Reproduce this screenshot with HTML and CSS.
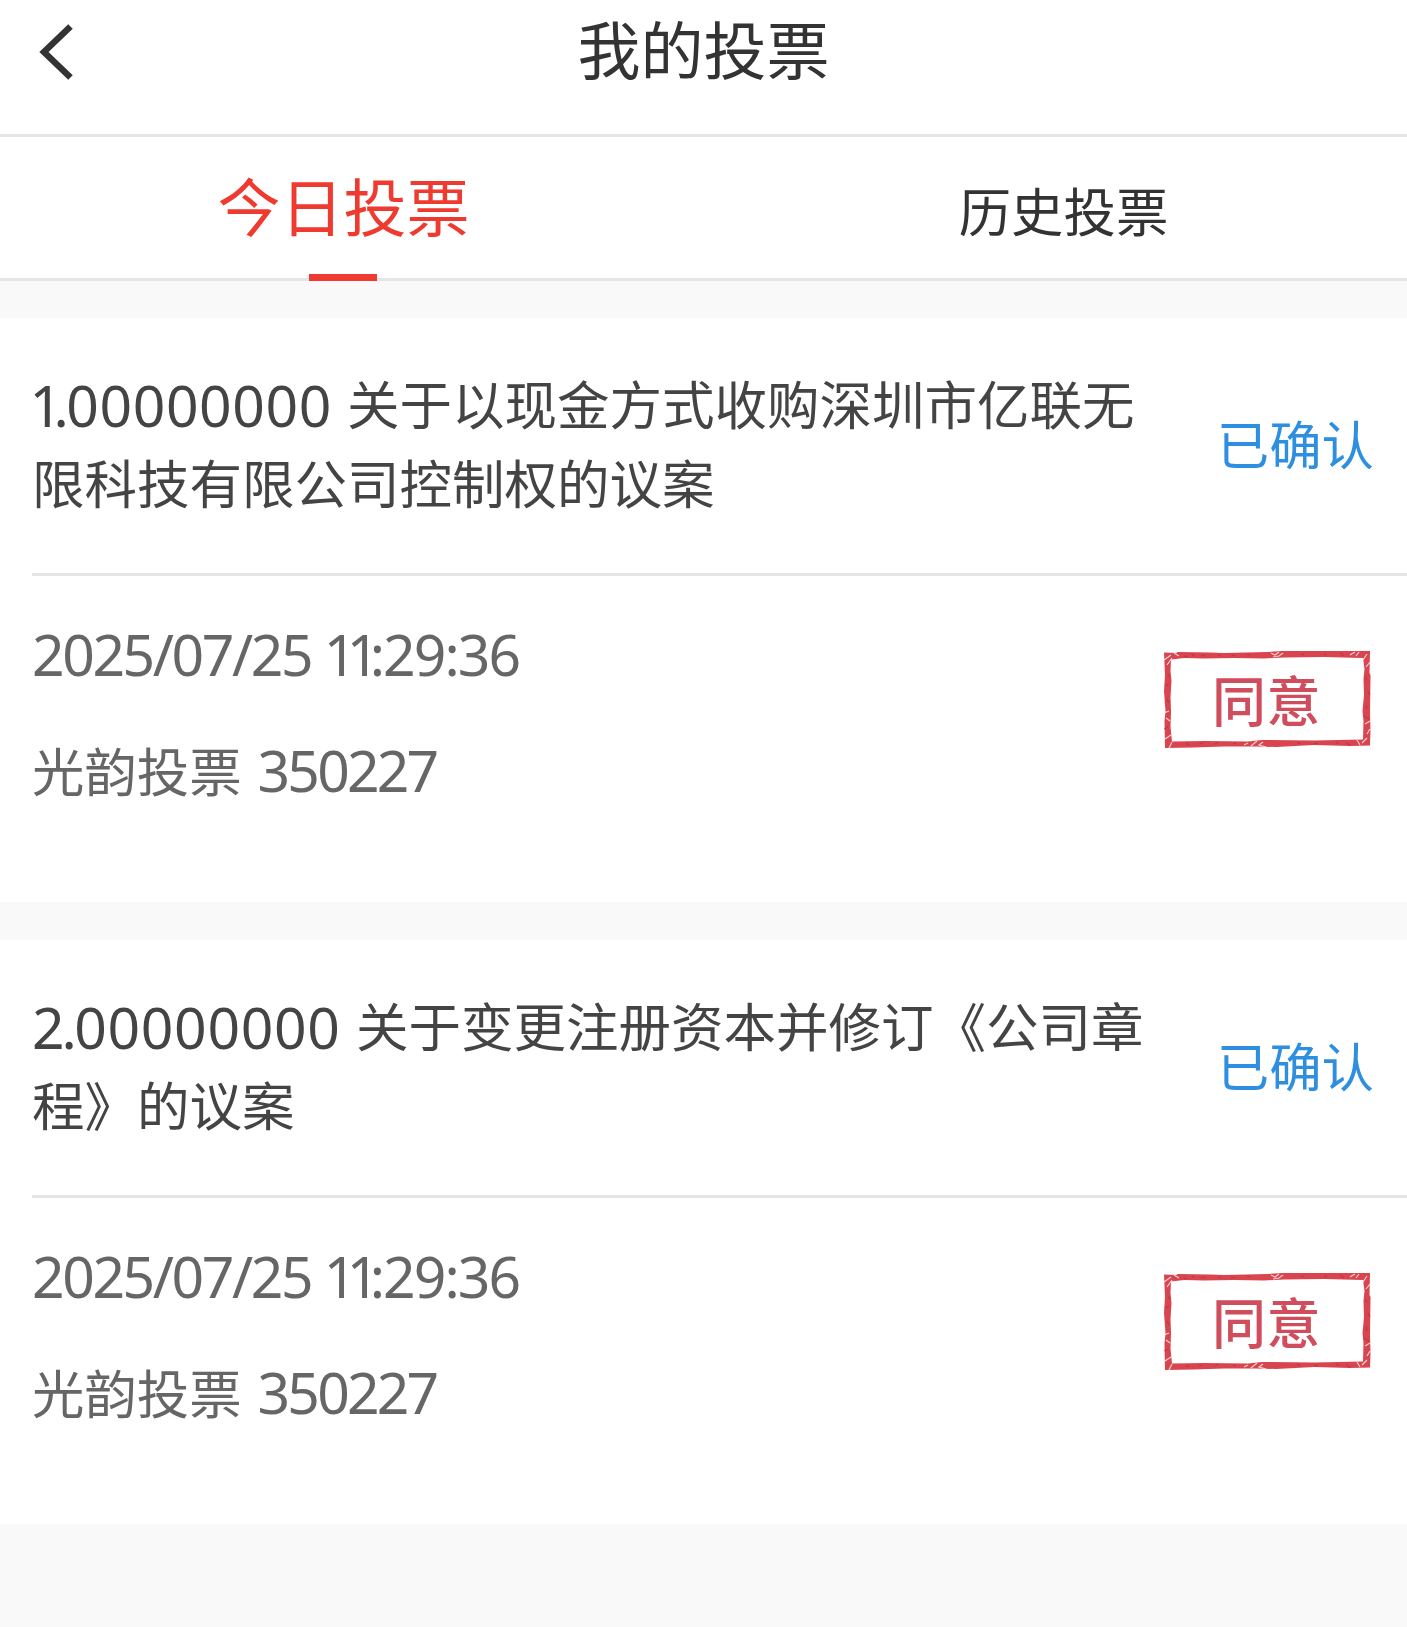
FILE: index.html
```html
<!DOCTYPE html>
<html lang="zh-CN">
<head>
<meta charset="utf-8">
<title>我的投票</title>
<link rel="stylesheet" href="styles.css">
</head>
<body>
<svg class="defs" width="0" height="0" aria-hidden="true">
  <symbol id="stamp-frame" viewBox="0 0 207 97">
    <path class="stamp-ink" fill-rule="evenodd" d="M0 1.5L12 2L14 1L46 1.6L60 2L104 1L118 0L206 0L205.500 22L206.500 24L206 62L206.500 80L206 94.500L186 95L150 94L112 96L92 95.500L60 95.500L30 96.500L1 97L.5 70L1.500 60L0 40L1 24ZM7 8.500L6.500 20L7.500 30L6.500 46L7 60L6.500 76L8 90.500L40 90L84 90.500L98 89L150 89.500L199 88.500L199.500 70L198.500 60L200 44L199.500 28L200.500 18L199 7L160 6L120 6.500L100 7.500L70 7L40 7.500L20 7Z"/>
    <path class="stamp-wear" d="M0 9l7-5M3 14l5-7M10 2l5 3M107 2l4 2 4-3M109 6l6-1 4-3M186 4l5-3M192 5l3-4M199 9l4-6M202 16l4-5M201 73l5-3M203 83l3-5M198 92l5-5M193 89l3 5M99 91l-4 3 7 2M93 90l-6 5M84 92l-4 2M8 91l-3 6M1 88l6-4M5 60l-5 2M2 67l4 3"/>
    <path class="stamp-grain" d="M20 5l3 1M28 3l2 2M37 5l4-1M54 4l3 1M67 5l4-1M83 3l3 1M137 3l3 1M160 4l3-1M176 2l4 3M201 26l2 3M204 40l2 4M202 54l1 4M200 65l5 3M182 92l4 2M172 91l3 2M150 93l4-1M133 91l3 2M72 92l-3 1M54 91l-3 2M35 93l4-1M22 92l3 2M0 78l4-2M3 48l2 4M1 35l4-2M4 23l2 3"/>
  </symbol>
</svg>

<header class="header">
  <svg class="back" viewBox="0 0 40 60" role="img" aria-label="返回"><path d="M36.500 4.500L10 30L36.500 55.500"/></svg>
  <h1 class="header-title">我的投票</h1>
</header>

<nav class="tabs">
  <a class="tab tab-active">今日投票</a>
  <a class="tab">历史投票</a>
</nav>

<main class="list">
  <article class="card">
    <div class="card-head">
      <h2 class="card-title"><span class="num num-first"><span class="lead-one">1</span><span class="dot">.</span>00000000</span>关于以现金方式收购深圳市亿联无<br>限科技有限公司控制权的议案</h2>
      <span class="status">已确认</span>
    </div>
    <div class="card-body">
      <div class="meta">
        <p><span class="num date">2025/07/25 <span class="clock"><span class="ones">11</span>:29:36</span></span></p>
        <p>光韵投票<span class="num code">350227</span></p>
      </div>
      <div class="stamp"><svg class="stamp-svg"><use href="#stamp-frame"/></svg><span class="stamp-text">同意</span></div>
    </div>
  </article>

  <article class="card">
    <div class="card-head">
      <h2 class="card-title"><span class="num num-second"><span class="lead-two">2</span><span class="dot">.</span>00000000</span>关于变更注册资本并修订《公司章<br>程》的议案</h2>
      <span class="status">已确认</span>
    </div>
    <div class="card-body">
      <div class="meta">
        <p><span class="num date">2025/07/25 <span class="clock"><span class="ones">11</span>:29:36</span></span></p>
        <p>光韵投票<span class="num code">350227</span></p>
      </div>
      <div class="stamp"><svg class="stamp-svg"><use href="#stamp-frame"/></svg><span class="stamp-text">同意</span></div>
    </div>
  </article>
</main>
</body>
</html>
```
FILE: styles.css
```css
* { box-sizing: border-box; }

body {
  margin: 0;
  min-height: 1627px;
  background: #f9f9f9;
  color: #333;
  font-family: "Noto Sans CJK SC", sans-serif;
  font-size: 52.4px;
}

h1, h2, p { margin: 0; font-weight: 400; }

.defs { position: absolute; }

.header {
  display: grid;
  grid-template-columns: 100px 1fr 100px;
  height: 137px;
  background: #fff;
  border-bottom: 3px solid #e5e5e5;
}

.back {
  width: 40px;
  height: 60px;
  margin: 21.5px 0 0 34px;
  fill: none;
  stroke: #333;
  stroke-width: 6.5;
}

.header-title {
  height: 93px;
  line-height: 93px;
  font-size: 63px;
  text-align: center;
}

.tabs {
  display: grid;
  grid-template-columns: 687px 687px;
  justify-content: space-between;
  height: 144px;
  background: #fff;
  border-bottom: 3px solid #e5e5e5;
}

.tab {
  position: relative;
  height: 144px;
  line-height: 144px;
  text-align: center;
}

.tab-active {
  line-height: 133px;
  font-size: 63px;
  color: #ef3a30;
}

.tab-active::after {
  content: "";
  position: absolute;
  left: 309px;
  bottom: 0;
  width: 68px;
  height: 7px;
  background: #ef3a30;
}

.list {
  display: flex;
  flex-direction: column;
  gap: 38px;
  padding-top: 37px;
}

.card {
  height: 584px;
  padding-left: 32px;
  background: #fff;
}

.card-head {
  display: flex;
  justify-content: space-between;
  align-items: center;
  height: 258px;
  padding: 0 33px 8px 0;
  border-bottom: 3px solid #e5e5e5;
}

.card-title {
  font-size: 52.5px;
  line-height: 78.6px;
  color: #444;
  white-space: nowrap;
}

.num {
  display: inline-block;
  font-family: "Noto Sans", sans-serif;
  font-size: 57px;
  line-height: 1;
  white-space: nowrap;
}

.num-first, .num-second { vertical-align: -2px; }
.num-first { width: 317.500px; margin-left: -2.500px; letter-spacing: .6px; }
.num-second { width: 324px; letter-spacing: .7px; }
.lead-one { letter-spacing: -8.600px; }
.lead-two { letter-spacing: -3.200px; }
.dot { letter-spacing: -2.500px; }

.status { color: #2e8fe0; }

.card-body {
  display: flex;
  justify-content: space-between;
  padding: 19px 36px 0 0;
}

.meta {
  color: #666;
  line-height: 116px;
}

.date { letter-spacing: -2.400px; }
.clock { letter-spacing: -1.900px; }
.ones { letter-spacing: -9.600px; }
.code { margin-left: 16px; letter-spacing: -2.800px; }

.stamp {
  display: grid;
  width: 207px;
  height: 97px;
  margin-top: 56px;
  color: #cf4d5c;
}

.stamp-svg, .stamp-text { grid-area: 1 / 1; }
.stamp-svg { width: 207px; height: 97px; }
.stamp-ink { fill: #d9444f; }
.stamp-wear { fill: none; stroke: #fff; stroke-width: 1.2; opacity: .75; }
.stamp-grain { fill: none; stroke: #b52c3c; stroke-width: 1.2; opacity: .6; }

.stamp-text {
  height: 97px;
  line-height: 96px;
  padding-left: 48px;
  font-size: 54px;
  font-weight: 500;
  letter-spacing: .5px;
}
```
